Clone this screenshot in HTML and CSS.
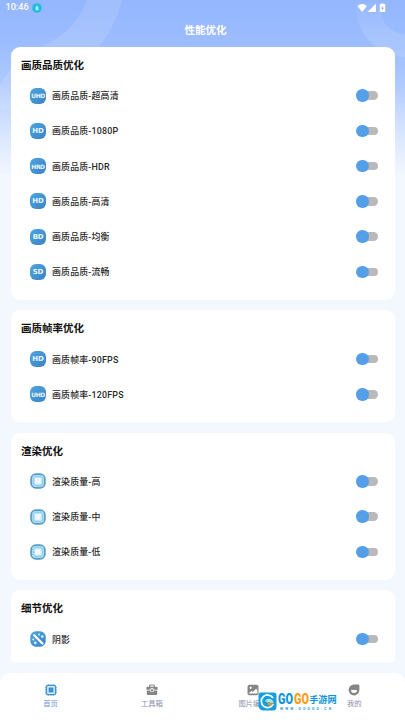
FILE: index.html
```html
<!DOCTYPE html>
<html lang="zh-CN">
<head>
<meta charset="utf-8">
<title>性能优化</title>
<link rel="stylesheet" href="styles.css">
</head>
<body>
<svg class="defs" width="0" height="0" aria-hidden="true">
  <defs>
    <linearGradient id="blue" x1="0" y1="0" x2="1" y2="1"><stop offset="0" stop-color="#4ea6df"/><stop offset="1" stop-color="#3b82c5"/></linearGradient>
    <linearGradient id="arc" x1="0" y1="0" x2="0" y2="1"><stop offset="0" stop-color="#fff" stop-opacity="0"/><stop offset=".6" stop-color="#fff" stop-opacity=".13"/></linearGradient>
    <symbol id="chip" viewBox="0 0 16 16">
      <rect x=".3" y=".3" width="15.4" height="15.4" rx="5.5" fill="#5599c5"/>
      <rect x="2" y="2" width="12" height="12" rx="3.4" fill="#b5e0f6"/>
      <path d="M5.5 1.6v12.8M8 1.6v12.8M10.5 1.6v12.8M1.6 5.5h12.8M1.6 8h12.8M1.6 10.5h12.8" stroke="#8dcae9" stroke-width=".7"/>
      <rect x="3.8" y="3.8" width="8.4" height="8.4" rx="1.5" fill="#d5f0fc" stroke="#7dbfe6" stroke-width=".8"/>
      <rect x="5.5" y="5.5" width="5" height="5" rx=".7" fill="#effaff"/>
    </symbol>
    <symbol id="wand" viewBox="0 0 16 16">
      <rect x=".3" y=".3" width="15.4" height="15.4" rx="5.5" fill="url(#blue)"/>
      <path d="M4.2 4.3l8.2 8.2" stroke="#fff" stroke-width="2.3" stroke-linecap="round"/>
      <circle cx="9.1" cy="3.5" r="1" fill="#dff4ff"/><circle cx="12.3" cy="5.5" r="1.3" fill="#dff4ff"/><circle cx="3.3" cy="8.4" r="1" fill="#dff4ff"/><circle cx="5.3" cy="11.9" r="1.3" fill="#dff4ff"/>
    </symbol>
  </defs>
</svg>
<div class="screen">
  <svg class="rings" width="405" height="110" viewBox="0 0 405 110" aria-hidden="true">
    <path d="M87 0H122C118 18 109 34 97 50L60 110H0V85C14 62 22 53 40 47C62 38 79 22 87 0Z" fill="#fff" opacity=".12"/>
    <path d="M356 0C354 32 374 55 405 57V34C388 33 379 20 380 0Z" fill="url(#arc)"/>
  </svg>
  <header class="status">
    <span class="time">10:46</span>
    <svg class="badge" width="10" height="10" viewBox="0 0 10 10"><circle cx="5" cy="5" r="4.8" fill="#23bbdf"/><path d="M5 2.2L6.4 4.5V7.3H3.6V4.5Z" fill="#a8f1fa"/></svg>
    <svg class="signals" width="31" height="10" viewBox="0 0 31 10" fill="#fff"><path d="M.3 3.100Q5.100-1 9.900 3.100L5.200 9Z"/><path d="M19 .6V9H10.600Z"/><path d="M24.300 1V.4h2.400V1h.9q.6 0 .6.6v6.800q0 .6-.6.6h-4.200q-.6 0-.6-.6V1.600q0-.6.6-.6z"/><path d="M25.600 2.700L24.200 5.400h1v2l1.600-2.700h-1.200z" fill="#83a6ea"/></svg>
  </header>
  <h1 class="heading">性能优化</h1>
  <main class="list">
    <section class="card">
      <h2>画质品质优化</h2>
      <div class="row"><i class="icon wide">UHD</i><span>画质品质-超高清</span><b class="switch"></b></div>
      <div class="row"><i class="icon">HD</i><span>画质品质-1080P</span><b class="switch"></b></div>
      <div class="row"><i class="icon wide">HRD</i><span>画质品质-HDR</span><b class="switch"></b></div>
      <div class="row"><i class="icon">HD</i><span>画质品质-高清</span><b class="switch"></b></div>
      <div class="row"><i class="icon">BD</i><span>画质品质-均衡</span><b class="switch"></b></div>
      <div class="row"><i class="icon">SD</i><span>画质品质-流畅</span><b class="switch"></b></div>
    </section>
    <section class="card">
      <h2>画质帧率优化</h2>
      <div class="row"><i class="icon">HD</i><span>画质帧率-90FPS</span><b class="switch"></b></div>
      <div class="row"><i class="icon wide">UHD</i><span>画质帧率-120FPS</span><b class="switch"></b></div>
    </section>
    <section class="card">
      <h2>渲染优化</h2>
      <div class="row"><svg class="pic"><use href="#chip"/></svg><span>渲染质量-高</span><b class="switch"></b></div>
      <div class="row"><svg class="pic"><use href="#chip"/></svg><span>渲染质量-中</span><b class="switch"></b></div>
      <div class="row"><svg class="pic"><use href="#chip"/></svg><span>渲染质量-低</span><b class="switch"></b></div>
    </section>
    <section class="card">
      <h2>细节优化</h2>
      <div class="row"><svg class="pic"><use href="#wand"/></svg><span>阴影</span><b class="switch"></b></div>
    </section>
  </main>
  <nav class="tabs">
    <div class="tab active">
      <svg width="12" height="12" viewBox="0 0 12 12"><path d="M3.4.3v2M6 .3v2M8.6.3v2M3.4 9.7v2M6 9.7v2M8.6 9.7v2M.3 3.4h2M.3 6h2M.3 8.6h2M9.7 3.4h2M9.7 6h2M9.7 8.6h2" stroke="#5aa5dc" stroke-width="1"/><rect x="1.4" y="1.4" width="9.2" height="9.2" rx="1.6" fill="#d3edfb" stroke="#3f93d3" stroke-width="1.4"/><rect x="3.6" y="3.6" width="4.8" height="4.8" rx=".5" fill="#3e8fd2"/></svg>
      <span>首页</span>
    </div>
    <div class="tab">
      <svg width="12" height="12" viewBox="0 0 12 12"><path d="M3.7 3V1.6q0-.6.6-.6h3.4q.6 0 .6.6V3" fill="none" stroke="#858585" stroke-width="1.1"/><path d="M1.4 2.7h9.2q1 0 1 1v2H8.2a2.3 2.3 0 0 0-4.4 0H.4v-2q0-1 1-1zM.8 6.5h3a2.3 2.3 0 0 0 4.4 0h3v3.7q0 .8-.8.8H1.6q-.8 0-.8-.8z" fill="#858585"/><circle cx="6" cy="6.2" r="1.2" fill="#858585"/></svg>
      <span>工具箱</span>
    </div>
    <div class="tab">
      <svg width="12" height="12" viewBox="0 0 12 12"><rect x=".5" y=".8" width="11" height="10.4" rx="2" fill="#858585"/><circle cx="3.7" cy="3.8" r="1.1" fill="#fff"/><path d="M1.6 9.6L4.4 7l1.4 1.1L9 4.8l1.4 1.3v3.5z" fill="#fff"/></svg>
      <span>图片编辑</span>
    </div>
    <div class="tab">
      <svg width="12" height="12" viewBox="0 0 12 12"><path d="M6 .6h4.3q1.1 0 1.1 1.1V6A5.4 5.4 0 1 1 6 .6z" fill="#858585"/><path d="M3 6h6A3 3 0 0 1 3 6z" fill="#fff"/></svg>
      <span>我的</span>
    </div>
  </nav>
  <div class="watermark">
    <svg width="19" height="19" viewBox="0 0 19 19"><path d="M3 .5h12.500q3 0 3 3V15q0 3.500-3.500 3.500H5Q1 18 .5 14V3q0-2.500 2.500-2.500z" fill="#159fdc"/><path d="M15 6A6.300 6.300 0 1 0 15.300 12" fill="none" stroke="#fff" stroke-width="1.700"/><path d="M7 9q3-4 7-1l2 2.500q-6 1-9-1.500z" fill="#a8e6f0"/><path d="M8.500 9.500q3 2.500 7.500 1.300-2.500 4-5.500 2.200z" fill="#ff8f15"/></svg>
    <div class="brand">
      <div class="name"><span class="go">GO</span><span class="go orange">GO</span><span class="zh">手游网</span></div>
      <div class="url">WWW.GOGOG.CN</div>
    </div>
  </div>
</div>
</body>
</html>
```
FILE: styles.css
```css
* { box-sizing: border-box; margin: 0; padding: 0; }
body {
  width: 405px;
  height: 720px;
  overflow: hidden;
  font-family: Roboto, "Noto Sans CJK SC", sans-serif;
}
.defs { position: absolute; }
.screen {
  position: relative;
  display: flex;
  flex-direction: column;
  height: 720px;
  background: linear-gradient(180deg, #94b6fd 0, #9cbdff 45px, #b0caff 85px, #d3e1ff 125px, #f3f8fe 176px, #f3f7fe 100%);
}
.rings { position: absolute; top: 0; left: 0; }
.status {
  position: relative;
  display: flex;
  align-items: center;
  height: 15px;
  padding: 0 17px 0 5.5px;
  color: #fff;
}
.time { width: 26.5px; font-size: 9.1px; font-weight: 500; line-height: 15px; }
.signals { margin-left: auto; }
.heading {
  position: relative;
  height: 32px;
  padding-left: 6px;
  color: #fff;
  font-size: 10.5px;
  font-weight: 700;
  line-height: 31px;
  text-align: center;
}
.list {
  position: relative;
  display: flex;
  flex-direction: column;
  gap: 10.4px;
  height: 615px;
  margin: 0 10.5px;
  overflow: hidden;
}
.card { flex: none; padding: 6px 17px 10.5px 10.5px; border-radius: 9px; background: #fff; }
.card h2 { height: 25px; color: #111; font-size: 10.5px; font-weight: 700; line-height: 25px; }
.row {
  display: flex;
  align-items: center;
  height: 35.25px;
  padding-left: 9px;
  color: #292929;
  font-size: 8.9px;
  font-weight: 500;
  letter-spacing: 0.2px;
}
.icon, .pic { flex: none; width: 16px; height: 16px; margin-right: 6px; }
.icon {
  display: flex;
  align-items: center;
  justify-content: center;
  border-radius: 6px;
  background: linear-gradient(135deg, #4ea6df, #3b82c5);
  color: #e6f6ff;
  font: 700 7px "DejaVu Sans", sans-serif;
  letter-spacing: -0.2px;
}
.icon.wide { font-size: 6px; letter-spacing: -0.4px; }
.switch {
  position: relative;
  width: 18px;
  height: 8.5px;
  margin-left: auto;
  border-radius: 5px;
  background: #b9b9b9;
}
.switch::before {
  content: "";
  position: absolute;
  top: -2px;
  left: -3.5px;
  width: 12.5px;
  height: 12.5px;
  border-radius: 50%;
  background: #559fe8;
}
.tabs {
  display: flex;
  height: 47px;
  margin-top: auto;
  border-radius: 10px 10px 0 0;
  background: #fff;
}
.tab {
  display: flex;
  flex: 1;
  flex-direction: column;
  align-items: center;
  padding-top: 10.5px;
  color: #8c8fae;
  font-size: 7.3px;
  line-height: 10px;
}
.tab svg { margin-bottom: 3px; }
.tab.active { color: #6f91d2; }
.watermark { position: absolute; top: 692px; left: 258px; display: flex; gap: 1px; }
.brand { width: 60px; }
.name {
  display: flex;
  align-items: center;
  height: 14px;
  color: #0c93da;
  text-shadow: 0 0 1px #fff, 0 0 1px #fff;
}
.go {
  flex: none;
  width: 15.6px;
  font: 900 15.5px/13px Roboto, sans-serif;
  transform: scaleX(.7);
  transform-origin: left;
}
.orange { color: #ff9b13; }
.zh { font-size: 9.2px; font-weight: 700; line-height: 13px; white-space: nowrap; }
.url {
  padding: 1px 0 0 2px;
  color: #249cda;
  font-size: 3.4px;
  font-weight: 700;
  line-height: 4px;
  letter-spacing: 2.2px;
  white-space: nowrap;
}
```
